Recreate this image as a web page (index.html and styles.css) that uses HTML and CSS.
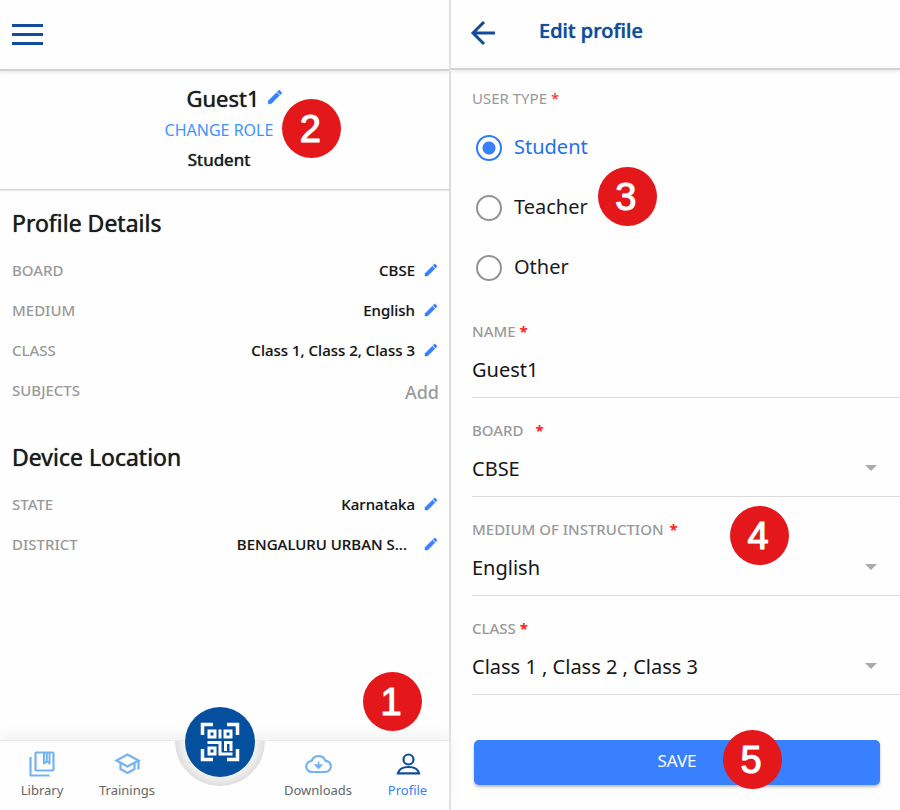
FILE: index.html
```html
<!DOCTYPE html>
<html lang="en">
<head>
<meta charset="utf-8">
<meta name="viewport" content="width=device-width, initial-scale=1">
<title>Profile</title>
<link rel="stylesheet" href="styles.css">
</head>
<body>
<svg class="sprite" aria-hidden="true">
  <symbol id="pencil" viewBox="0 0 24 24"><path d="M3 17.25V21h3.75L17.8 9.94l-3.75-3.75L3 17.25zM20.7 7.04a1 1 0 0 0 0-1.41l-2.34-2.34a1 1 0 0 0-1.41 0l-1.83 1.83 3.75 3.75 1.83-1.83z" stroke="#3880ff" stroke-width=".8"/></symbol>
</svg>
<div class="app">
  <main class="pane">
    <header class="topbar">
      <button class="icon-btn menu" type="button" aria-label="Menu">
        <svg width="32" height="24" viewBox="0 0 32 24"><path d="M0 2.500h31M0 11.500h31M0 20.500h31" stroke="#134c9b" stroke-width="2.800"/></svg>
      </button>
    </header>
    <section class="identity">
      <h1 class="name strong">Guest1
        <button class="icon-btn name-edit" type="button" aria-label="Edit name"><svg width="18" height="18"><use href="#pencil"/></svg></button>
      </h1>
      <div class="role-line"><a class="change-role" href="#role">CHANGE ROLE</a><span class="badge badge-role">2</span></div>
      <p class="role strong">Student</p>
    </section>
    <section class="details">
      <h2 class="strong">Profile Details</h2>
      <dl>
        <div class="row"><dt>BOARD</dt><dd>CBSE</dd><button class="icon-btn" type="button" aria-label="Edit board"><svg width="16" height="16"><use href="#pencil"/></svg></button></div>
        <div class="row"><dt>MEDIUM</dt><dd>English</dd><button class="icon-btn" type="button" aria-label="Edit medium"><svg width="16" height="16"><use href="#pencil"/></svg></button></div>
        <div class="row"><dt>CLASS</dt><dd>Class 1, Class 2, Class 3</dd><button class="icon-btn" type="button" aria-label="Edit class"><svg width="16" height="16"><use href="#pencil"/></svg></button></div>
        <div class="row"><dt>SUBJECTS</dt><dd class="add"><button type="button" class="add-btn">Add</button></dd></div>
      </dl>
      <h2 class="strong second">Device Location</h2>
      <dl>
        <div class="row"><dt>STATE</dt><dd>Karnataka</dd><button class="icon-btn" type="button" aria-label="Edit state"><svg width="16" height="16"><use href="#pencil"/></svg></button></div>
        <div class="row"><dt>DISTRICT</dt><dd class="clipped">BENGALURU URBAN S...</dd><button class="icon-btn" type="button" aria-label="Edit district"><svg width="16" height="16"><use href="#pencil"/></svg></button></div>
      </dl>
    </section>
    <nav class="tabs">
      <a href="#library">
        <svg width="28" height="28" viewBox="0 0 28 28" fill="none" stroke="#74b3f2" stroke-width="2.200" stroke-linejoin="round"><rect x="7.500" y="2.500" width="18" height="18" rx="1"/><path d="M2.500 7v18.500h19"/><path d="M16 2.500v11l2.800-2.500 2.700 2.500v-11M18.800 2.500V11" stroke-width="2"/></svg>
        <span>Library</span></a>
      <a href="#trainings">
        <svg width="28" height="28" viewBox="0 0 28 28" fill="none" stroke="#74b3f2" stroke-width="2.200"><path d="M3.500 10.500 14.500 4.500l11 6-11 6z"/><path d="M7.500 13v6l7 4 7-4v-6M25.500 10.500v9"/></svg>
        <span>Trainings</span></a>
      <div class="scan-slot">
        <div class="scan-notch"></div>
        <button class="scan" type="button" aria-label="Scan QR code">
          <svg width="40" height="40" viewBox="0 0 40 40" fill="none" stroke="#fff" stroke-width="3"><path d="M2.500 13V2.500H13M27 2.500h10.500V13M2.500 27v10.500H13M27 37.500h10.500V27" stroke-width="3.500"/><path d="M9 9h6v6H9zM25 9h6v6h-6zM9 26h6v6H9zM20 7.500v9M7.500 20.500H20V32h12.500M25.500 29v-8.500H31V29"/></svg>
        </button>
      </div>
      <a href="#downloads">
        <svg width="28" height="28" viewBox="0 0 28 28" fill="none" stroke="#74b3f2" stroke-width="2.200"><path d="M8 22a5.500 5.500 0 0 1-.5-11 7.500 7.500 0 0 1 14-.2 5.600 5.600 0 0 1-.5 11.200z"/><path d="M14.500 11.500v4M11.500 15h6l-3 3.200z" fill="#74b3f2" stroke-width="1.600"/></svg>
        <span>Downloads</span></a>
      <a href="#profile" class="active" aria-current="page">
        <svg width="28" height="28" viewBox="0 0 28 28" fill="none" stroke="#134c9b" stroke-width="2.200"><circle cx="14.500" cy="9.500" r="5"/><path d="M4 23.300c1-4 5-6.300 10.500-6.300S24 19.300 25 23.300z"/></svg>
        <span>Profile</span></a>
      <span class="badge badge-profile">1</span>
    </nav>
  </main>

  <form class="pane editor">
    <header class="topbar">
      <button class="icon-btn back" type="button" aria-label="Back"><svg width="26" height="26" viewBox="0 0 26 26" fill="none" stroke="#134c9b" stroke-width="3"><path d="M25 12H3M14 1 3 12l11 11"/></svg></button>
      <h1 class="title strong">Edit profile</h1>
    </header>
    <fieldset class="types">
      <legend>USER TYPE <span class="req">*</span></legend>
      <label><input type="radio" name="type" checked><span>Student</span></label>
      <label><input type="radio" name="type"><span>Teacher</span><span class="badge badge-type">3</span></label>
      <label><input type="radio" name="type"><span>Other</span></label>
    </fieldset>
    <div class="field"><label for="name">NAME <span class="req">*</span></label><input id="name" type="text" value="Guest1"></div>
    <div class="field"><label for="board">BOARD <span class="req spaced">*</span></label><select id="board"><option>CBSE</option></select><svg class="caret" width="12" height="6"><path d="M0 0h12L6 6z"/></svg></div>
    <div class="field"><label for="medium">MEDIUM OF INSTRUCTION <span class="req near">*</span></label><select id="medium"><option>English</option></select><svg class="caret" width="12" height="6"><path d="M0 0h12L6 6z"/></svg><span class="badge badge-medium">4</span></div>
    <div class="field"><label for="class">CLASS <span class="req">*</span></label><select id="class"><option>Class 1 , Class 2 , Class 3</option></select><svg class="caret" width="12" height="6"><path d="M0 0h12L6 6z"/></svg></div>
    <div class="actions"><button class="save" type="button">SAVE</button><span class="badge badge-save">5</span></div>
  </form>
</div>
</body>
</html>
```
FILE: styles.css
```css
* { box-sizing: border-box; }
body, h1, h2, p, dl, dd, fieldset { margin: 0; padding: 0; }
body { font-family: "Noto Sans", sans-serif; color: #1b1c1d; background: #fefefe; }
button, input, select { font: inherit; color: inherit; }
.sprite { position: absolute; width: 0; height: 0; }
.app { display: grid; grid-template-columns: 449fr 451fr; min-height: 100vh; overflow: hidden; }
.pane { display: flex; flex-direction: column; min-width: 0; }
.editor { border-left: 2px solid #dcdcdc; }
.strong { font-weight: 400; text-shadow: 0 0 1px currentColor; }
.icon-btn { display: flex; padding: 0; border: 0; background: none; fill: #3880ff; }

.topbar { display: flex; align-items: center; height: 71px; padding: 0 12px; border-bottom: 2px solid #d2d2d2; box-shadow: 0 2px 3px #ececec; }
.editor .topbar { padding: 0 19px; gap: 43px; height: 70px; }
.title { color: #134c9b; font-size: 20px; font-weight: 500; line-height: 28px; padding-bottom: 6px; }

.identity { display: flex; flex-direction: column; align-items: center; height: 119px; padding: 12px 11px 0 0; border-bottom: 1px solid #d2d2d2; box-shadow: 0 1px 1px #ececec; }
.name { position: relative; font-size: 22px; line-height: 30px; margin-left: 8px; }
.name-edit { position: absolute; left: 100%; top: 5px; margin-left: 6px; }
.role-line { position: relative; line-height: 34px; }
.change-role { color: #3d94fb; font-size: 16px; text-decoration: none; }
.role { font-size: 17px; line-height: 26px; }

.details { flex: 1; padding: 17px 10px 24px 12px; }
.details h2 { font-size: 23px; line-height: 32px; margin-bottom: 11px; }
.details h2.second { margin-top: 31px; }
.row { display: flex; align-items: center; height: 40px; font-size: 15px; font-weight: 500; }
.row dt { color: #999; flex: 1; }
.row dd { color: #161616; margin-right: 8px; text-shadow: 0 0 1px #bbb; }
.row .clipped { margin-right: 16px; }
.row .add { margin: 0; padding-top: 4px; }
.add-btn { border: 0; padding: 0; background: none; font-size: 18px; color: #999; }

.tabs { position: relative; display: grid; grid-template-columns: 84fr 86fr 100fr 96fr 83fr; height: 70px; border-top: 1px solid #ebebeb; box-shadow: 0 -5px 12px #f1f1f1; background: #fefefe; }
.tabs a { display: flex; flex-direction: column; align-items: center; padding-top: 9px; color: #666; font-size: 13px; line-height: 24px; text-decoration: none; }
.tabs a.active { color: #3880ff; }
.scan-slot { position: relative; display: flex; justify-content: center; }
.scan-notch { width: 90px; height: 45px; border-radius: 0 0 45px 45px; background: radial-gradient(circle at 50% 0, #f2f2f2 36px, #dedede 45px); }
.scan { position: absolute; top: -34px; display: flex; align-items: center; justify-content: center; width: 70px; height: 70px; padding: 0; border: 0; border-radius: 50%; background: #04509f; }

.badge { position: absolute; z-index: 2; display: flex; align-items: center; justify-content: center; width: 59px; height: 59px; padding-right: 3px; border-radius: 50%; background: #e4181b; color: #fff; font: 38px/58px "Liberation Sans", sans-serif; -webkit-text-stroke: 1px #fff; text-shadow: 0 0 1px #fff; }
.badge-profile { right: 27px; top: -69px; }
.badge-role { left: 100%; top: -14px; margin-left: 9px; }
.badge-type { left: 100%; top: -9px; margin-left: 10px; }
.badge-medium { left: 258px; top: 9px; }
.badge-save { left: 50%; top: -10px; margin-left: 46px; }

.types { border: 0; min-width: 0; padding: 18px 0 3px 21px; }
.types legend { float: left; width: 100%; padding: 0; margin-bottom: 8px; font-size: 15px; line-height: 20px; color: #999; }
.types label { clear: both; position: relative; display: flex; align-items: center; width: max-content; height: 60px; gap: 12px; padding-left: 4px; font-size: 20px; }
.types input { appearance: none; width: 26px; height: 26px; margin: 3px 0 0; border: 2px solid #939393; border-radius: 50%; }
.types input:checked { border-color: #2b7bfb; background: radial-gradient(circle, #3880ff 6px, transparent 7px); }
.types input:checked + span { color: #1f70ee; }
.req { color: #f22; }
.field { position: relative; margin-left: 21px; padding: 22px 0 8px; border-bottom: 1px solid #dcdcdc; }
.field label { display: block; margin-bottom: 8px; font-size: 15px; line-height: 20px; font-weight: 500; color: #999; }
.field .req { font-weight: 700; }
.spaced { margin-left: 8px; }
.near { margin-left: 2px; }
.field input, .field select { display: block; appearance: none; width: 100%; height: 40px; padding: 0; border: 0; outline: 0; background: none; font-size: 20px; color: #161616; }
.caret { position: absolute; right: 23px; top: 67px; fill: #aaa; }
.actions { position: relative; margin: 45px 20px 24px 23px; }
.save { display: block; width: 100%; height: 45px; padding: 0 0 4px; border: 0; border-radius: 5px; background: #3880ff; box-shadow: 0 2px 3px #bbb; color: #fff; font-size: 17px; }
```
